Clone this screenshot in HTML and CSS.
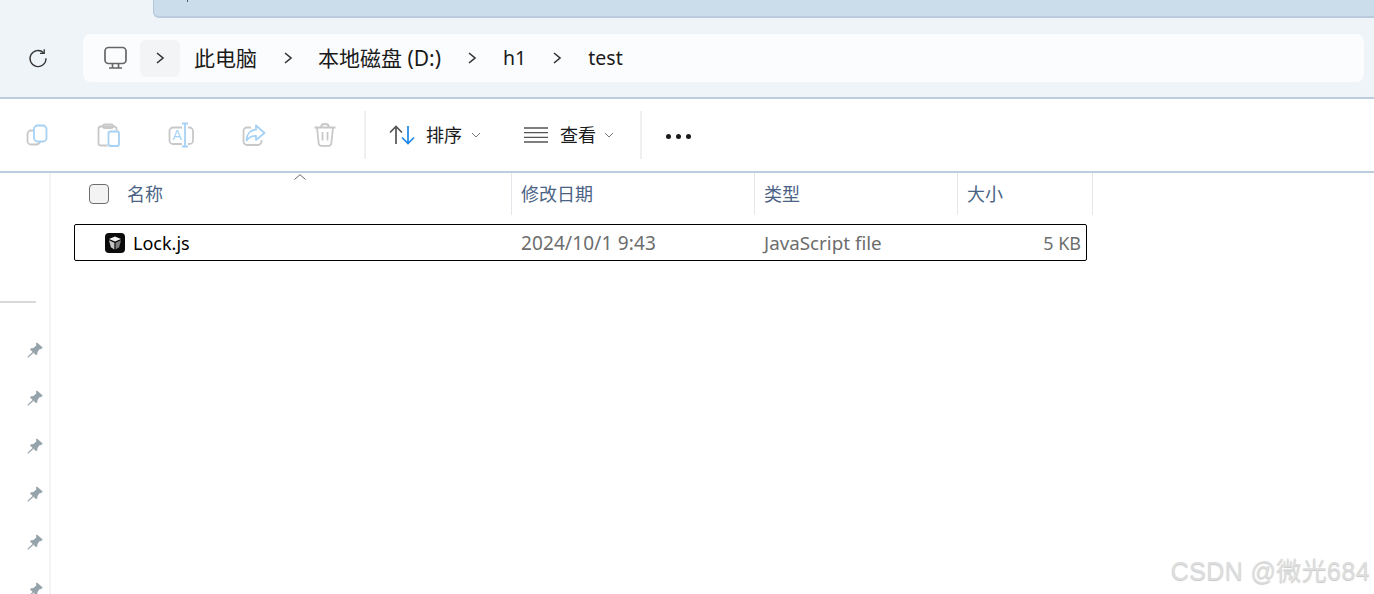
FILE: index.html
```html
<!DOCTYPE html>
<html lang="zh-CN">
<head>
<meta charset="utf-8">
<title>test</title>
<link rel="stylesheet" href="styles.css">
</head>
<body>
<div class="window">
  <header class="top">
    <div class="tabstrip"><div class="tab"><span class="tab-mark"></span></div></div>
    <div class="addr-row">
      <button class="reload" aria-label="刷新">
        <svg width="20" height="20" viewBox="0 0 20 20" fill="none" stroke="#333" stroke-width="1.3"><path d="M15.6 4.8A8 8 0 1 0 18 10.2"/><path d="M16.2 1.2v4.2h-4.2"/></svg>
      </button>
      <nav class="addr">
        <svg class="monitor" width="24" height="24" viewBox="0 0 24 24" fill="none" stroke="#666" stroke-width="1.7"><rect x="1" y="1.500" width="21" height="16" rx="3.500"/><path d="M8.500 17.500v4M14.500 17.500v4M5 22h13"/></svg>
        <span class="crumb-btn"><svg class="chev" width="10" height="14" viewBox="0 0 10 14" fill="none" stroke="#333" stroke-width="1.6"><path d="M2 2l6 5-6 5"/></svg></span>
        <span class="crumb first">此电脑</span>
        <span class="sep"><svg class="chev" width="10" height="14" viewBox="0 0 10 14" fill="none" stroke="#333" stroke-width="1.6"><path d="M2 2l6 5-6 5"/></svg></span>
        <span class="crumb">本地磁盘 (D:)</span>
        <span class="sep"><svg class="chev" width="10" height="14" viewBox="0 0 10 14" fill="none" stroke="#333" stroke-width="1.6"><path d="M2 2l6 5-6 5"/></svg></span>
        <span class="crumb latin">h1</span>
        <span class="sep"><svg class="chev" width="10" height="14" viewBox="0 0 10 14" fill="none" stroke="#333" stroke-width="1.6"><path d="M2 2l6 5-6 5"/></svg></span>
        <span class="crumb latin">test</span>
      </nav>
    </div>
  </header>

  <section class="toolbar">
    <div class="tool">
      <svg width="28" height="28" viewBox="0 0 28 28" fill="none" stroke-width="1.800"><path stroke="#c8c8c8" d="M10 9.500H8A3.500 3.500 0 0 0 4.500 13v7A3.500 3.500 0 0 0 8 23.500h5a4 4 0 0 0 4-3"/><rect stroke="#a6d2f5" x="11" y="4.500" width="12.500" height="16" rx="3.500"/></svg>
    </div>
    <div class="tool">
      <svg width="28" height="28" viewBox="0 0 28 28" fill="none" stroke-width="1.800"><path stroke="#c8c8c8" d="M12.500 24.500H6A2.500 2.500 0 0 1 3.500 22V8A2.500 2.500 0 0 1 6 5.500h13A2.500 2.500 0 0 1 21.500 8v1.500"/><rect stroke="#c8c8c8" x="8" y="3.500" width="10" height="3.500" rx="1.700"/><rect stroke="#a6d2f5" x="13.500" y="10.500" width="10.500" height="14.500" rx="2"/></svg>
    </div>
    <div class="tool">
      <svg width="28" height="28" viewBox="0 0 28 28" fill="none" stroke-width="1.800"><path stroke="#c8c8c8" d="M15 6.500H6A3.500 3.500 0 0 0 2.500 10v9.500A3.500 3.500 0 0 0 6 23h9M21 6.500h1.500A3.500 3.500 0 0 1 26 10v9.500a3.500 3.500 0 0 1-3.500 3.500H21"/><path stroke="#a6d2f5" d="M15 2.500h6M18 2.500v23M15 25.500h6"/><text class="glyph" x="5.500" y="19">A</text></svg>
    </div>
    <div class="tool">
      <svg width="28" height="28" viewBox="0 0 28 28" fill="none" stroke-width="1.800"><path stroke="#c8c8c8" d="M12 6.500H8A3.500 3.500 0 0 0 4.500 10v10.500A3.500 3.500 0 0 0 8 24h11a3.500 3.500 0 0 0 3.500-3.500V19"/><path stroke="#a6d2f5" stroke-linejoin="round" d="M17 4.500l8.500 7.500-8.500 7v-4.200c-4.500 0-7.500 1.500-9.500 4.700 0-6 3.500-10.300 9.500-10.800z"/></svg>
    </div>
    <div class="tool">
      <svg width="28" height="28" viewBox="0 0 28 28" fill="none" stroke="#c8c8c8" stroke-width="1.800"><path d="M3.500 6.500h21M10 6.500C10 4.500 11.500 3 14 3s4 1.500 4 3.500M6 6.500l1.700 16a2.500 2.500 0 0 0 2.500 2.300h7.600a2.500 2.500 0 0 0 2.500-2.300l1.700-16M11.500 11v8.500M16.500 11v8.500"/></svg>
    </div>
    <span class="divider"></span>
    <div class="action sort">
      <svg width="26" height="20" viewBox="0 0 26 20" fill="none" stroke-width="1.700"><path stroke="#555" d="M7 19V1.500M1 7.500l6-6 6 6"/><path stroke="#1e88e5" d="M19 1v17.500M13 12.500l6 6 6-6"/></svg>
      <span class="action-label">排序</span>
      <svg class="caret" width="10" height="6" viewBox="0 0 10 6" fill="none" stroke="#777" stroke-width="1"><path d="M1 1l4 4 4-4"/></svg>
    </div>
    <div class="action view">
      <svg width="24" height="16" viewBox="0 0 24 16" fill="none" stroke="#555" stroke-width="1.300"><path d="M0 1h24M0 5.700h24M0 10.300h24M0 15h24"/></svg>
      <span class="action-label">查看</span>
      <svg class="caret" width="10" height="6" viewBox="0 0 10 6" fill="none" stroke="#777" stroke-width="1"><path d="M1 1l4 4 4-4"/></svg>
    </div>
    <span class="divider second"></span>
    <div class="dots"><i></i><i></i><i></i></div>
  </section>

  <div class="body">
    <aside class="side">
      <div class="side-rule"></div>
      <ul class="pins">
        <li><svg width="16" height="16" viewBox="0 0 16 16" fill="#97a3ab"><path d="M10 .5L15.700 5.500 14 7.300 12.700 7 10.500 10 10.300 12.500 8.800 13 3 7.500 4 6.200 6.500 6 9.300 3.500 9 1.500z"/><path d="M5.500 10l1 1L1 15.800.3 15z"/></svg></li>
        <li><svg width="16" height="16" viewBox="0 0 16 16" fill="#97a3ab"><path d="M10 .5L15.700 5.500 14 7.300 12.700 7 10.500 10 10.300 12.500 8.800 13 3 7.500 4 6.200 6.500 6 9.300 3.500 9 1.500z"/><path d="M5.500 10l1 1L1 15.800.3 15z"/></svg></li>
        <li><svg width="16" height="16" viewBox="0 0 16 16" fill="#97a3ab"><path d="M10 .5L15.700 5.500 14 7.300 12.700 7 10.500 10 10.300 12.500 8.800 13 3 7.500 4 6.200 6.500 6 9.300 3.500 9 1.500z"/><path d="M5.500 10l1 1L1 15.800.3 15z"/></svg></li>
        <li><svg width="16" height="16" viewBox="0 0 16 16" fill="#97a3ab"><path d="M10 .5L15.700 5.500 14 7.300 12.700 7 10.500 10 10.300 12.500 8.800 13 3 7.500 4 6.200 6.500 6 9.300 3.500 9 1.500z"/><path d="M5.500 10l1 1L1 15.800.3 15z"/></svg></li>
        <li><svg width="16" height="16" viewBox="0 0 16 16" fill="#97a3ab"><path d="M10 .5L15.700 5.500 14 7.300 12.700 7 10.500 10 10.300 12.500 8.800 13 3 7.500 4 6.200 6.500 6 9.300 3.500 9 1.500z"/><path d="M5.500 10l1 1L1 15.800.3 15z"/></svg></li>
        <li><svg width="16" height="16" viewBox="0 0 16 16" fill="#97a3ab"><path d="M10 .5L15.700 5.500 14 7.300 12.700 7 10.500 10 10.300 12.500 8.800 13 3 7.500 4 6.200 6.500 6 9.300 3.500 9 1.500z"/><path d="M5.500 10l1 1L1 15.800.3 15z"/></svg></li>
      </ul>
    </aside>
    <main class="list">
      <div class="head">
        <div class="col col-name">
          <span class="check"></span>
          <span>名称</span>
          <svg class="sort-caret" width="12" height="6" viewBox="0 0 12 6" fill="none" stroke="#666" stroke-width="1"><path d="M.5 5.500L6 .7l5.500 4.800"/></svg>
        </div>
        <div class="col col-date">修改日期</div>
        <div class="col col-type">类型</div>
        <div class="col col-size">大小</div>
      </div>
      <div class="row">
        <div class="cell-name">
          <svg width="20" height="20" viewBox="0 0 20 20"><rect width="20" height="20" rx="4" fill="#0a0a0a"/><path fill="#f2f2f2" d="M10 3.500l6 2.500L10 8.600 4 6z"/><path fill="#c4c4c4" d="M4 7.300L9.400 9.800v6.700L5.800 14.200z"/><path fill="#808080" d="M16 7.300L10.600 9.800v6.700l3.600-2.300z"/></svg>
          <span>Lock.js</span>
        </div>
        <div class="cell cell-date">2024/10/1 9:43</div>
        <div class="cell cell-type">JavaScript file</div>
        <div class="cell cell-size">5 KB</div>
      </div>
    </main>
  </div>
  <div class="watermark">CSDN @微光684</div>
</div>
</body>
</html>
```

FILE: styles.css
```css
* { box-sizing: border-box; }
html, body { margin: 0; padding: 0; height: 100%; overflow: hidden; background: #fff; }
body { font-family: "Noto Sans", "Noto Sans CJK SC", sans-serif; color: #1a1a1a; }
.window { position: relative; width: 1374px; height: 594px; overflow: hidden; display: flex; flex-direction: column; }

.top { height: 99px; flex: none; background: #eff4f9; border-bottom: 2px solid #bccdde; }
.tabstrip { height: 34px; padding-left: 153px; }
.tab { position: relative; width: 1221px; height: 18px; background: #cbdcea; border-left: 1px solid #b4c8da; border-bottom: 2px solid #b9cbdc; border-bottom-left-radius: 6px; }
.tab-mark { position: absolute; left: 33px; top: 0; width: 1px; height: 2px; background: #556; }
.addr-row { display: flex; height: 48px; padding-left: 28px; padding-right: 10px; }
.reload { width: 20px; height: 48px; padding: 0; margin-right: 35px; border: 0; background: none; display: flex; align-items: center; }
.addr { flex: 1; display: flex; align-items: center; height: 48px; padding-left: 21px; background: #fbfcfe; border-radius: 8px; font-size: 21px; line-height: 28px; white-space: nowrap; }
.monitor { flex: none; margin-right: 12px; }
.crumb-btn { flex: none; width: 40px; height: 37px; margin-right: 14px; background: #f3f4f6; border-radius: 6px; display: flex; align-items: center; justify-content: center; }
.sep { flex: none; width: 62px; display: flex; justify-content: center; }
.first + .sep { width: 61px; }
.latin { font-size: 19.5px; }
.chev { display: block; }

.toolbar { height: 74px; flex: none; padding-left: 1px; display: flex; align-items: center; background: #fff; border-bottom: 2px solid #bccdde; }
.tool { width: 72px; height: 72px; flex: none; display: flex; align-items: center; justify-content: center; }
.glyph { font-family: "Liberation Sans", sans-serif; font-size: 14px; fill: #a6d2f5; stroke: none; }
.divider { flex: none; width: 2px; height: 48px; margin-left: 3px; background: #efefef; }
.action { flex: none; display: flex; align-items: center; font-size: 18px; line-height: 24px; }
.sort { margin-left: 23px; }
.sort .action-label { margin-left: 11px; }
.view { margin-left: 43px; }
.view .action-label { margin-left: 12px; }
.caret { margin-left: 9px; }
.view .caret { margin-left: 8px; }
.second { margin-left: 26px; }
.dots { margin-left: 24px; margin-top: 2px; display: flex; gap: 5px; }
.dots i { display: block; width: 5px; height: 5px; border-radius: 50%; background: #1a1a1a; }

.body { flex: 1; display: flex; min-height: 0; }
.side { flex: none; width: 51px; padding-top: 128px; border-right: 2px solid #f4f4f4; }
.side-rule { width: 36px; height: 2px; background: #d9d9d9; }
.pins { list-style: none; margin: 0; padding: 39px 0 0 27px; display: flex; flex-direction: column; gap: 32px; }
.pins li { height: 16px; }
.pins svg { display: block; }

.list { flex: 1; min-width: 0; font-size: 18px; line-height: 24px; }
.head { display: grid; grid-template-columns: 436px 243px 203px 136px; height: 42px; margin-left: 24px; width: 1018px; }
.col { display: flex; align-items: center; border-left: 1px solid #e3e6ea; padding-left: 9px; color: #4a6385; }
.col-size { border-right: 1px solid #e3e6ea; }
.col-name { position: relative; border-left: 0; padding-left: 14px; gap: 18px; }
.check { width: 20px; height: 20px; flex: none; border: 1px solid #6e6e6e; border-radius: 4px; background: #f3f3f3; }
.sort-caret { position: absolute; left: 219px; top: 1px; }
.row { display: grid; grid-template-columns: 436px 243px 203px 1fr; align-items: center; width: 1013px; height: 37px; margin-top: 9px; margin-left: 23px; border: 1px solid #000; border-radius: 2px; }
.cell-name { display: flex; align-items: center; gap: 8px; padding-left: 30px; color: #000; }
.cell { padding-left: 10px; color: #6d6d6d; }
.cell-date { font-size: 19px; letter-spacing: 0.15px; }
.cell-type { font-size: 18.8px; }
.cell-size { padding: 0 5px 0 0; text-align: right; }

.watermark { position: absolute; right: 4px; bottom: 7px; font-family: "Liberation Sans", "Noto Sans CJK SC", sans-serif; font-size: 25px; line-height: 32px; letter-spacing: 0.4px; color: #dedede; text-shadow: 0 1px 1px #c8c8c8; white-space: nowrap; }
```
